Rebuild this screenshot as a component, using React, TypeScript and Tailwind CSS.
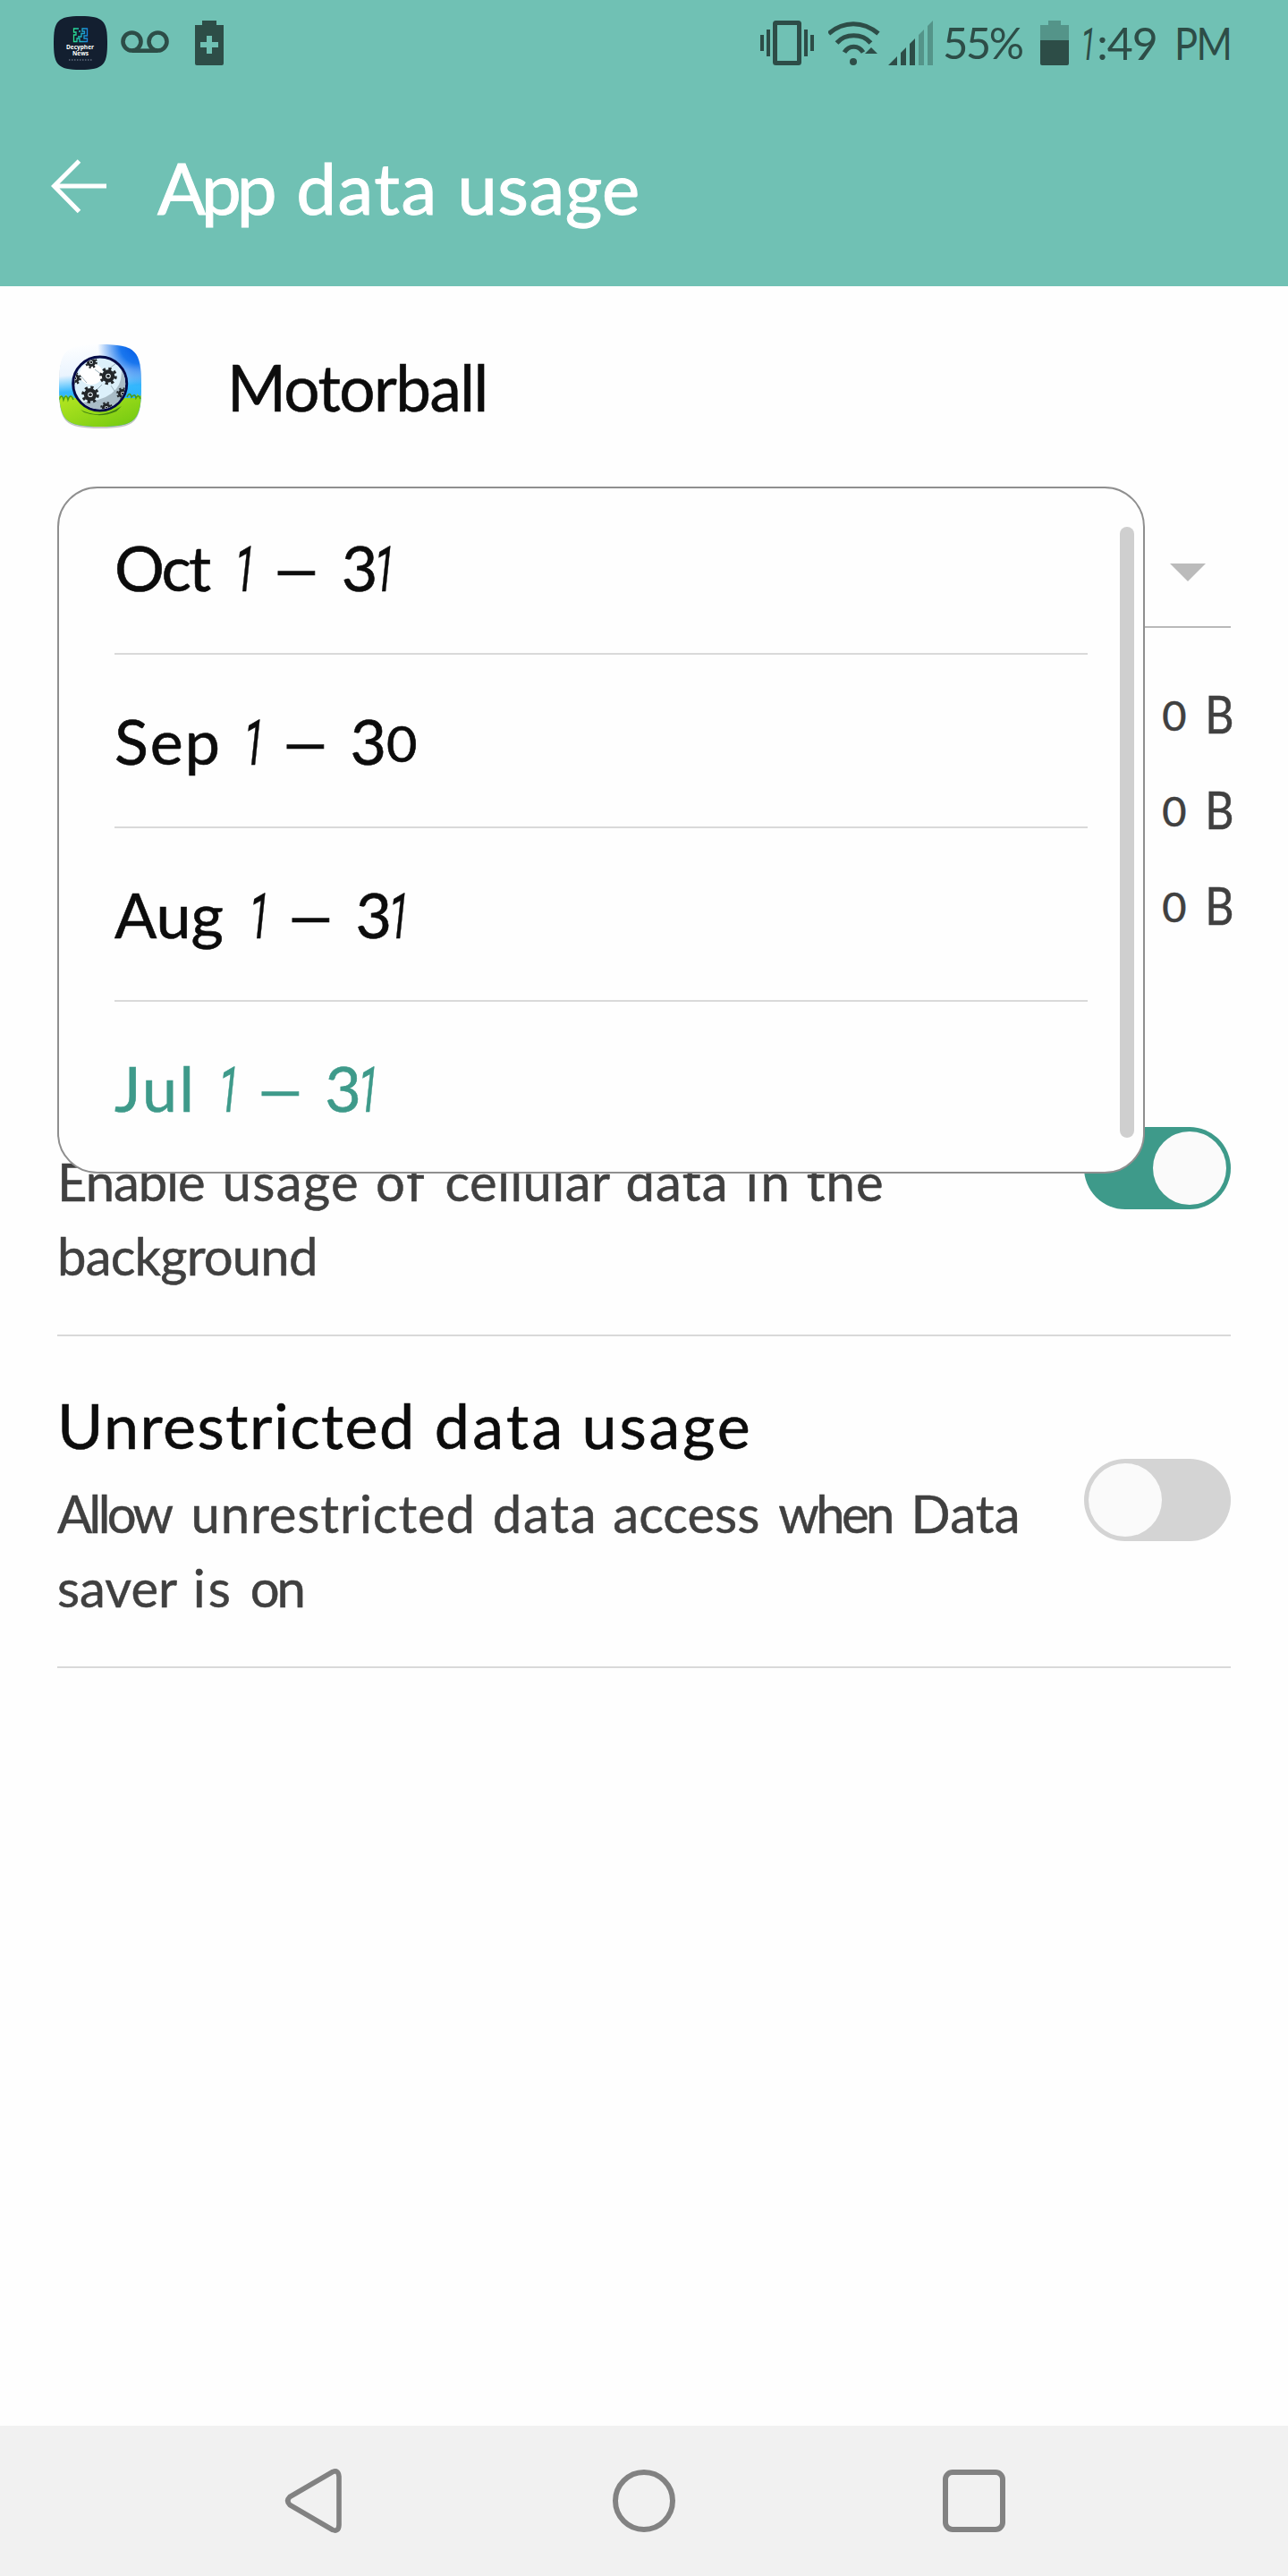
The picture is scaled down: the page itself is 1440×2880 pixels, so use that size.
import type { ReactNode } from "react";

const DARK = "#2d4d47";
const LIGHT = "#549489";

function One({ className = "" }: { className?: string }) {
  return (
    <span className={`inline-block scale-x-[0.62] font-['Roboto'] italic leading-none ${className}`}>1</span>
  );
}

function W({ className = "", children }: { className?: string; children: ReactNode }) {
  return <span className={className}>{children}</span>;
}

function StatusBar() {
  return (
    <div className="flex h-24 items-stretch pl-[60px] text-[#2d4d47]">
      <svg className="h-24 w-[60px]" viewBox="0 0 60 96">
        <defs>
          <linearGradient id="maze" x1="0" x2="1" y1="0" y2="0">
            <stop offset="0" stopColor="#2be08c" />
            <stop offset=".5" stopColor="#1fb7c4" />
            <stop offset="1" stopColor="#1a86e0" />
          </linearGradient>
        </defs>
        <path d="M0 48C0 24 4 18 30 18S60 24 60 48 56 78 30 78 0 72 0 48Z" fill="#131f30" />
        <rect x="1.5" y="20" width="57" height="56" rx="15" fill="#131f30" />
        <path
          d="M28 32H22.500V36H25V39H22.500V46.500H26V43H29V46.500H37.500V43H34V40H37.500V32H32V35H34.500V37.500H31V41H27M28 35H30"
          fill="none"
          stroke="url(#maze)"
          strokeWidth="1.300"
        />
        <text x="29.500" y="55" textAnchor="middle" fontFamily="Open Sans" fontSize="6.500" fontWeight="700" fill="#fff">
          Decypher
        </text>
        <text x="30" y="62" textAnchor="middle" fontFamily="Open Sans" fontSize="6.500" fontWeight="700" fill="#fff">
          News
        </text>
        <path d="M17 67H43" stroke="#8b95a3" strokeWidth="1.200" strokeDasharray="1.500 1.500" />
      </svg>
      <svg className="ml-[15px] h-24 w-[54px]" viewBox="0 0 54 96" fill="none" stroke={DARK} strokeWidth="4.600">
        <circle cx="12.500" cy="46.500" r="10" />
        <circle cx="41.500" cy="46.500" r="10" />
        <path d="M12.500 56.700H41.500" />
      </svg>
      <svg className="ml-[29px] h-24 w-8" viewBox="0 0 32 96" fill={DARK}>
        <path
          fillRule="evenodd"
          d="M8 23H24V28H32V71a2 2 0 0 1-2 2H2a2 2 0 0 1-2-2V28H8ZM13 40V47H6V53H13V60H19V53H26V47H19V40Z"
        />
      </svg>
      <div className="flex-1" />
      <svg className="h-24 w-[60px]" viewBox="0 0 60 96" fill={DARK}>
        <rect x="16.500" y="25.500" width="27" height="45" rx="1" fill="none" stroke={DARK} strokeWidth="5" />
        <rect x="0" y="39" width="4" height="18" />
        <rect x="7" y="33" width="4" height="30" />
        <rect x="49" y="33" width="4" height="30" />
        <rect x="56" y="39" width="4" height="18" />
      </svg>
      <svg className="ml-4 h-24 w-[60px]" viewBox="0 0 60 96" fill="none" stroke={DARK} strokeWidth="5">
        <path d="M0.500 37.500C17 23 39 23 56 37.500" />
        <path d="M9.500 48C19 37 38 37 47.500 48" />
        <path d="M18 58.500C23 50 34 50 39 58.500" />
        <circle cx="28" cy="69" r="4" fill={DARK} stroke="none" />
        <path d="M41 60H55L48 53Z" fill={DARK} stroke="none" />
      </svg>
      <svg className="ml-[7px] h-24 w-[50px]" viewBox="0 0 50 96" fill={DARK}>
        <path d="M0 73L10 63V73ZM14 73V59L20 53V73ZM24 73V49L30 43V73Z" />
        <path d="M34 73V39L40 33V73ZM44 73V29L50 23V73Z" fill={LIGHT} />
      </svg>
      <div className="ml-[11px] w-[109px] text-[49px] leading-[94px] tracking-[-2.6px] whitespace-nowrap">55%</div>
      <svg className="h-24 w-8" viewBox="0 0 32 96">
        <path d="M9 23H23V28H32V45H0V28H9Z" fill={LIGHT} />
        <path d="M0 45H32V71a2 2 0 0 1-2 2H2a2 2 0 0 1-2-2Z" fill={DARK} />
      </svg>
      <div className="ml-2 w-[237px] text-[50px] leading-[97px] whitespace-nowrap">
        <One className="mr-[-4px]" />
        <W className="tracking-[-1px]">:49</W>{" "}
        <W className="ml-[6px] inline-block origin-left scale-x-[0.87] leading-none tracking-[-2px]">PM</W>
      </div>
    </div>
  );
}

function Toolbar() {
  return (
    <div className="flex h-56 items-center pl-[57px]">
      <svg className="h-[62px] w-[63px]" viewBox="0 0 63 62" fill="none" stroke="#fff" strokeWidth="5">
        <path d="M31.500 3L3.500 31L31.500 59.500M4 31H62" />
      </svg>
      <h1 className="ml-[56px] pt-[2px] text-[80px] leading-[100px] font-normal text-white [-webkit-text-stroke:1px_white]">
        <W className="tracking-[-5px]">App</W> <W className="ml-[6px] tracking-[1.5px]">data</W>{" "}
        <W className="ml-[1px] tracking-[0.5px]">usage</W>
      </h1>
    </div>
  );
}

function Gear({ x, y, s = 1 }: { x: number; y: number; s?: number }) {
  return (
    <g transform={`translate(${x} ${y}) scale(${s})`}>
      <circle r="8.300" fill="none" stroke="#222629" strokeWidth="3" strokeDasharray="3.260 3.260" />
      <circle r="5" fill="#eef7fb" stroke="#222629" strokeWidth="4.400" />
      <circle r="1.800" fill="#222629" />
    </g>
  );
}

function GameIcon() {
  return (
    <svg className="h-24 w-24" viewBox="0 0 96 96">
      <defs>
        <linearGradient id="sky" x1=".2" y1="0" x2=".3" y2="1">
          <stop offset="0" stopColor="#fff" />
          <stop offset=".36" stopColor="#eaf4fe" />
          <stop offset=".55" stopColor="#35b8fd" />
          <stop offset="1" stopColor="#12a9f8" />
        </linearGradient>
        <radialGradient id="blue" cx=".95" cy=".02" r=".48">
          <stop offset="0" stopColor="#0057e4" />
          <stop offset=".45" stopColor="#1976ee" />
          <stop offset="1" stopColor="#1976ee" stopOpacity="0" />
        </radialGradient>
        <linearGradient id="grass" x1="0" y1="0" x2="1" y2="1">
          <stop offset="0" stopColor="#b9e822" />
          <stop offset="1" stopColor="#6cc60f" />
        </linearGradient>
        <clipPath id="tile">
          <path d="M2 47C2 8 8 1 48 1S94 8 94 47 88 93 48 93 2 86 2 47Z" />
        </clipPath>
        <clipPath id="ball">
          <circle cx="47.700" cy="45" r="28.500" />
        </clipPath>
      </defs>
      <path d="M2 49C2 10 8 3 48 3S94 10 94 49 88 95 48 95 2 88 2 49Z" fill="#000" opacity=".22" />
      <g clipPath="url(#tile)">
        <rect width="96" height="96" fill="url(#sky)" />
        <rect width="96" height="96" fill="url(#blue)" />
        <path d="M0 60l4-2 3 3 3-4 2 4 4-3 3 3 70 0 0-5 3 3 4-2V96H0Z" fill="url(#grass)" />
        <path
          d="M2 63q3-8 5 0q3-8 5 0q3-8 6 0M78 60q3-7 5 0q4-5 5 1q3-5 5 1"
          fill="none"
          stroke="#4a9c13"
          strokeWidth="1.600"
        />
        <path d="M26 74q22 12 46-4l-6 6q-18 8-36 1Z" fill="#3f7f12" />
      </g>
      <circle cx="47.700" cy="45" r="30" fill="#dcf0fa" stroke="#040b47" strokeWidth="3" />
      <g clipPath="url(#ball)">
        <path d="M71 24Q78 62 27 66L40 80H80V30Z" fill="#a9bcc6" />
        <ellipse cx="38" cy="34" rx="13" ry="12" fill="#fff" />
        <path
          d="M42 29L50 35M33 44L26 36M42 54L50 46M60 47L66 56M46 66L42 64M58 28L66 22"
          stroke="#9db2bd"
          strokeWidth="1"
        />
        <Gear x={57} y={36.5} />
        <Gear x={37} y={57.3} />
        <Gear x={38} y={21} s={0.7} />
        <Gear x={20} y={39} s={0.7} />
        <Gear x={73} y={56} s={0.7} />
        <Gear x={55} y={72} s={0.7} />
      </g>
    </svg>
  );
}

function Toggle({ on = false }: { on?: boolean }) {
  return (
    <div
      className={`flex h-[92px] w-[164px] items-center rounded-full px-[5px] ${
        on ? "justify-end bg-[#3e9a8a]" : "justify-start bg-[#d4d4d4]"
      }`}
    >
      <div className="size-[82px] rounded-full bg-[#fafafa]" />
    </div>
  );
}

function Period({
  month,
  monthClass,
  gapClass,
  selected = false,
  end,
}: {
  month: string;
  monthClass: string;
  gapClass: string;
  selected?: boolean;
  end: "1" | "0";
}) {
  return (
    <li
      className={`h-[194px] border-b-2 text-[70px] leading-[192px] whitespace-nowrap [-webkit-text-stroke-width:0.6px] last:border-b-0 ${
        selected ? "border-transparent text-[#3e9a8a]" : "border-[#d9d9d9] text-[#0c0c0c]"
      }`}
    >
      <W className={monthClass}>{month}</W> <One className={gapClass} />{" "}
      <span className="inline-block scale-x-[1.46] leading-none">–</span>{" "}
      <W className="ml-[12px] tracking-[-4px]">3</W>
      {end === "1" ? (
        <One className="ml-[-7px]" />
      ) : (
        <span className="relative -top-[3px] ml-[5px] inline-block scale-x-[1.06] text-[56px] leading-none">0</span>
      )}
    </li>
  );
}

function PeriodMenu() {
  return (
    <div className="absolute top-0 left-16 h-[768px] w-[1216px] overflow-hidden rounded-[45px] border-2 border-[#8f8f8f] bg-[#fefefe]">
      <ul className="-mt-2 ml-[62px] w-[1088px]">
        <Period month="Oct" monthClass="tracking-[-3px]" gapClass="ml-[4px]" end="1" />
        <Period month="Sep" monthClass="tracking-[2px]" gapClass="ml-[-1px]" end="0" />
        <Period month="Aug" monthClass="" gapClass="ml-[3px]" end="1" />
        <Period month="Jul" monthClass="tracking-[2.5px]" gapClass="ml-[-1px]" end="1" selected />
      </ul>
      <div className="absolute top-[43px] right-[10px] h-[683px] w-4 rounded-full bg-[#cfcfcf]" />
    </div>
  );
}

function Amount() {
  return (
    <div className="flex h-[107px] items-baseline justify-end text-[58px] leading-[107px] [-webkit-text-stroke-width:0.5px]">
      <span className="text-[47px]">
        <span className="relative -top-[3px]">0</span>
      </span>
      <span className="mr-[-3px] ml-[15px] origin-right scale-x-[0.86]">B</span>
    </div>
  );
}

function NavBar() {
  return (
    <nav className="flex h-[168px] items-center bg-[#f1f1f1] pl-[318px]">
      <svg className="h-[76px] w-[66px]" viewBox="0 0 66 76" fill="none" stroke="#828282" strokeWidth="5.600">
        <path
          d="M6 33.500L54 5.500Q60.500 3 61 11V65Q60.500 73 54 70.500L6 42.500Q1.500 38 6 33.500Z"
          strokeLinejoin="round"
        />
      </svg>
      <div className="ml-[301px] size-[70px] rounded-full border-[6px] border-[#828282]" />
      <div className="ml-[299px] size-[70px] rounded-[11px] border-[6px] border-[#828282]" />
    </nav>
  );
}

export default function App() {
  return (
    <div className="flex h-[2880px] w-[1440px] flex-col overflow-hidden bg-[#fefefe] font-['Lato',sans-serif]">
      <header className="h-80 bg-[#70c1b4]">
        <StatusBar />
        <Toolbar />
      </header>

      <main className="flex-1">
        <div className="flex h-56 items-center pl-16 text-[#0c0c0c]">
          <GameIcon />
          <span className="ml-[94px] pt-[2px] text-[71px] leading-[100px] tracking-[-1.5px] [-webkit-text-stroke:0.6px_#0c0c0c]">
            Motorball
          </span>
        </div>

        <div className="relative">
          <div className="px-16">
            <div className="flex h-[158px] items-center justify-end border-b-2 border-[#b9b9b9] pt-[36px] pr-7">
              <svg className="h-5 w-10" viewBox="0 0 40 20">
                <path d="M0 0H40L20 20Z" fill="#bbb" />
              </svg>
            </div>
            <div className="pt-[42px] text-[#404040]">
              <Amount />
              <Amount />
              <Amount />
            </div>

            <section className="mt-[58px] flex h-[371px] items-center justify-between border-b-2 border-[#d9d9d9] pb-[3px]">
              <p className="self-end pb-[44px] text-[58px] leading-[83px] whitespace-nowrap text-[#404040] [-webkit-text-stroke-width:0.5px]">
                <W className="tracking-[-1px]">Enable</W> <W className="ml-[5px] tracking-[1.4px]">usage</W>{" "}
                <W className="ml-[3px] tracking-[2px]">of</W> <W className="ml-[6px] tracking-[0.5px]">cellular</W>{" "}
                <W className="ml-[2px] tracking-[1.2px]">data</W> <W className="ml-[4px] tracking-[3px]">in</W>{" "}
                <W className="ml-[1px] tracking-[1px]">the</W>
                <br />
                <W className="tracking-[-0.8px]">background</W>
              </p>
              <Toggle on />
            </section>

            <section className="flex h-[371px] items-center justify-between border-b-2 border-[#d9d9d9] pb-[3px]">
              <div className="self-end pb-[44px] whitespace-nowrap">
                <h2 className="text-[70px] leading-[114px] font-normal text-[#0c0c0c] [-webkit-text-stroke:0.6px_#0c0c0c]">
                  <W className="tracking-[1.5px]">Unrestricted</W> <W className="ml-[3px] tracking-[3.4px]">data</W>{" "}
                  <W className="tracking-[2.8px]">usage</W>
                </h2>
                <p className="text-[58px] leading-[83px] text-[#404040] [-webkit-text-stroke-width:0.5px]">
                  <W className="tracking-[-3.6px]">Allow</W> <W className="ml-[8px] tracking-[0.9px]">unrestricted</W>{" "}
                  <W className="ml-[4px] tracking-[1.8px]">data</W> <W className="ml-[2px]">access</W>{" "}
                  <W className="ml-[6px] tracking-[-3.6px]">when</W> <W className="ml-[7px] tracking-[0.2px]">Data</W>
                  <br />
                  <W>saver</W> <W className="ml-[4px] tracking-[3px]">is</W>{" "}
                  <W className="ml-[4px] tracking-[-3px]">on</W>
                </p>
              </div>
              <Toggle />
            </section>
          </div>
          <PeriodMenu />
        </div>
      </main>

      <NavBar />
    </div>
  );
}
